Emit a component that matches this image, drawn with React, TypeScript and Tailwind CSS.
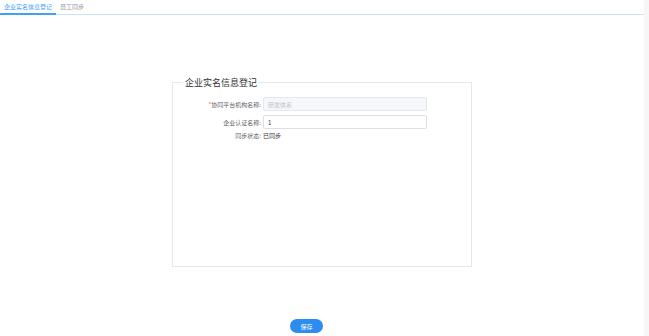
// Enterprise real-name registration page with tabs, fieldset form and save button

const font = { fontFamily: '"Noto Sans CJK SC", "Noto Sans", sans-serif' };

function Tabs() {
  return (
    <div className="flex h-[15px] border-b border-[#c6e2ff] text-[6px] leading-[14px]">
      <div className="-mb-px border-b-2 border-[#409eff] px-[4px] text-[#409eff]">企业实名信息登记</div>
      <div className="px-[4px] text-[#909399]">员工同步</div>
    </div>
  );
}

function Row({ label, required, children }: { label: string; required?: boolean; children: React.ReactNode }) {
  return (
    <div className="flex items-center">
      <div className="w-[90px] pr-[2px] text-right text-[6px] text-[#606266]">
        {required && <span className="text-[#f56c6c]">*</span>}
        {label}:
      </div>
      {children}
    </div>
  );
}

export default function App() {
  return (
    <div className="flex h-[336px] w-[649px] bg-white" style={font}>
      <div className="flex w-[644px] flex-col">
        <Tabs />

        {/* Registration form */}
        <fieldset className="mx-auto mt-[62px] h-[190px] w-[300px] border border-[#e4e7ed] p-0">
          <legend className="ml-[10px] px-[2px] text-[9px] leading-[11px] text-[#303133]">企业实名信息登记</legend>
          <div className="mt-[9px] flex flex-col gap-[4px]">
            <Row label="协同平台机构名称" required>
              <div className="flex h-[14px] w-[164px] items-center rounded-[2px] border border-[#e4e7ed] bg-[#f5f7fa] px-[4px] text-[6px] text-[#c0c4cc]">
                研发体系
              </div>
            </Row>
            <Row label="企业认证名称">
              <div className="flex h-[14px] w-[164px] items-center rounded-[2px] border border-[#dcdfe6] bg-white px-[4px] text-[6px] text-[#303133]">
                1
              </div>
            </Row>
            <div className="-mt-[2px]">
              <Row label="同步状态">
                <span className="text-[6px] text-[#303133]">已同步</span>
              </Row>
            </div>
          </div>
        </fieldset>

        <div className="mt-[52px] flex pl-[290px]">
          <button className="h-[14px] w-[33px] rounded-full bg-[#2d8cf0] text-[6px] text-white">保存</button>
        </div>
      </div>
      <div className="w-[5px] bg-[#f7f7f7]" />
    </div>
  );
}
